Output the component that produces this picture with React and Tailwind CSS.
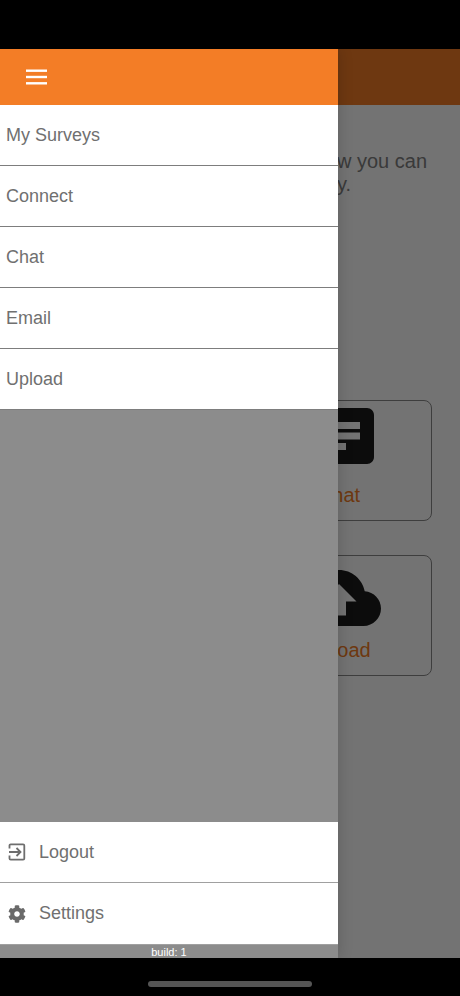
import { FaCog } from 'react-icons/fa';

const MENU = ['My Surveys', 'Connect', 'Chat', 'Email', 'Upload'];

function ChatIcon() {
  return (
    <svg width="84" height="84" viewBox="0 0 24 24" fill="#1c1c1c">
      <path d="M20 2H4c-1.1 0-2 .9-2 2v18l4-4h14c1.1 0 2-.9 2-2V4c0-1.1-.9-2-2-2zM6 9h12v2H6V9zm8 5H6v-2h8v2zm4-6H6V6h12v2z" />
    </svg>
  );
}

function UploadIcon() {
  return (
    <svg width="84" height="84" viewBox="0 0 24 24" fill="#1c1c1c">
      <path d="M19.35 10.04C18.67 6.59 15.64 4 12 4 9.11 4 6.6 5.64 5.35 8.04 2.34 8.36 0 10.91 0 14c0 3.31 2.69 6 6 6h13c2.76 0 5-2.24 5-5 0-2.64-2.05-4.78-4.65-4.96zM14 13v4h-4v-4H7l5-5 5 5h-3z" />
    </svg>
  );
}

function LogoutIcon() {
  return (
    <svg width="18" height="18" viewBox="0 0 18 18" fill="none" stroke="#6e6e6e" strokeWidth="1.8">
      <path d="M1.5 5.5V2.5a1.2 1.2 0 0 1 1.2-1.2h12.4a1.2 1.2 0 0 1 1.2 1.2v13a1.2 1.2 0 0 1-1.2 1.2H2.7a1.2 1.2 0 0 1-1.2-1.2v-3" />
      <path d="M1 9h11M8.5 5l4 4-4 4" />
    </svg>
  );
}

function Tile({ icon, label }) {
  return (
    <div className="h-[121px] border border-[#8a8a8a] rounded-lg flex flex-col items-center">
      {icon}
      <span className="text-[20px] leading-[23px] mt-[-1px] text-[#f37d26]">{label}</span>
    </div>
  );
}

export default function App() {
  return (
    <div className="h-[996px] bg-black flex flex-col font-['Liberation_Sans',Arial,sans-serif]">
      <div className="h-[49px] shrink-0" />

      <div className="relative h-[909px] shrink-0 bg-white overflow-hidden">
        {/* page behind the drawer */}
        <div className="h-[56px] bg-[#f37d26]" />
        <div className="pl-[337px] pt-[45px] text-[20px] leading-[23px] text-[#808080]">
          <p>w you can</p>
          <p>y.</p>
        </div>
        <div className="pl-[246px] pr-[28px] pt-[204px] flex flex-col gap-[34px]">
          <Tile icon={<ChatIcon />} label="Chat" />
          <Tile icon={<UploadIcon />} label="Upload" />
        </div>

        {/* dim layer */}
        <div className="absolute inset-0 bg-black/55" />

        {/* drawer */}
        <div className="absolute left-0 top-0 bottom-0 w-[338px] bg-[#8c8c8c] flex flex-col shadow-[0_0_14px_rgba(0,0,0,0.18)]">
          <div className="h-[56px] bg-[#f37d26] flex items-center pl-[26px] shrink-0">
            <svg width="21" height="16" viewBox="0 0 21 16" fill="#fff">
              <rect x="0" y="0.5" width="21" height="2.4" />
              <rect x="0" y="6.8" width="21" height="2.4" />
              <rect x="0" y="13.1" width="21" height="2.4" />
            </svg>
          </div>
          {MENU.map((item) => (
            <div
              key={item}
              className="h-[61px] bg-white border-b border-[#7d7d7d] flex items-center pl-[6px] text-[18px] text-[#707070]"
            >
              {item}
            </div>
          ))}

          <div className="mt-auto">
            <div className="h-[61px] bg-white border-b border-[#a0a0a0] flex items-center pl-[8px] text-[18px] text-[#707070]">
              <LogoutIcon />
              <span className="ml-[13px]">Logout</span>
            </div>
            <div className="h-[61px] bg-white flex items-center pl-[8px] text-[18px] text-[#707070]">
              <FaCog className="w-[18px] h-[18px] text-[#6a6a6a]" />
              <span className="ml-[13px]">Settings</span>
            </div>
            <div className="h-[14px] border-t border-[#a0a0a0] text-center text-[11px] leading-[15px] text-white">
              build: 1
            </div>
          </div>
        </div>
      </div>

      <div className="flex-1 flex justify-center pt-[23px]">
        <div className="w-[164px] h-[6px] rounded-full bg-[#555]" />
      </div>
    </div>
  );
}
